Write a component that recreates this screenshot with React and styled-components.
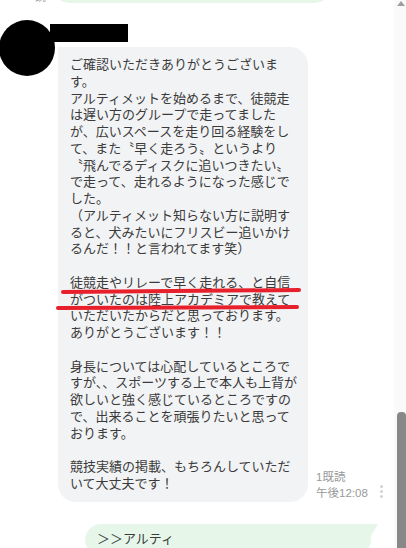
import { createGlobalStyle, styled } from 'styled-components'

const Global = createGlobalStyle`
  html, body {
    margin: 0;
    padding: 0;
    background: #ffffff;
  }
  body {
    font-family: "Noto Sans CJK JP", "Noto Sans", sans-serif;
  }
`

const Page = styled.div`
  width: 406px;
  height: 548px;
  display: flex;
  overflow: hidden;
  background: #ffffff;
`

const ChatArea = styled.div`
  position: relative;
  flex: 1;
  display: flex;
  flex-direction: column;
  overflow: hidden;
`

const TopRow = styled.div`
  display: flex;
  align-items: flex-end;
  height: 43px;
  margin-top: -40px;
  flex-shrink: 0;
`

const TopMeta = styled.span`
  width: 53px;
  padding-left: 35px;
  box-sizing: border-box;
  font-size: 11px;
  line-height: 14px;
  color: #a8a8a8;
  margin-bottom: 0;
`

const TopBubble = styled.div`
  width: 278px;
  height: 43px;
  background: #e6f7ea;
  border-radius: 0 0 16px 16px;
`

const IncomingRow = styled.div`
  display: flex;
  margin-top: 17px;
  flex-shrink: 0;
`

const Avatar = styled.div`
  width: 56px;
  height: 56px;
  border-radius: 50%;
  background: #000;
  margin-left: -1px;
  margin-right: 3px;
  flex-shrink: 0;
`

const Column = styled.div`
  display: flex;
  flex-direction: column;
`

const NameBar = styled.div`
  width: 78px;
  height: 18px;
  background: #000;
  margin-left: -8px;
  margin-top: 4px;
`

const BubbleRow = styled.div`
  display: flex;
  align-items: flex-end;
  margin-top: 5px;
`

const Bubble = styled.div`
  width: 250px;
  box-sizing: border-box;
  padding: 9px 12px 10px 12px;
  background: ${({ $sent }) => ($sent ? '#e6f7ea' : '#f2f3f5')};
  border-radius: ${({ $sent }) => ($sent ? '16px 0 16px 16px' : '0 18px 18px 18px')};
  color: #3b3b3b;
  font-size: 13px;
  line-height: 16.75px;
  white-space: pre;
`

const Meta = styled.div`
  display: flex;
  flex-direction: column;
  margin-left: 8px;
  padding-bottom: 1px;
  font-family: "Liberation Sans", "Noto Sans CJK JP", sans-serif;
  font-size: 11.5px;
  line-height: 16px;
  color: #999;
`

const Dots = styled.div`
  display: flex;
  flex-direction: column;
  gap: 2px;
  margin-left: 12px;
  margin-bottom: 4px;

  span {
    width: 3px;
    height: 3px;
    border-radius: 50%;
    background: #d2d2d2;
  }
`

const OutgoingRow = styled.div`
  display: flex;
  margin-top: 22px;
  padding-left: 85px;
  flex-shrink: 0;
`

const SentBubble = styled(Bubble)`
  position: relative;
  width: 286px;
  padding: 6px 12px 10px 12px;
  border-radius: 16px 0 16px 16px;

  &::after {
    content: '';
    position: absolute;
    top: 0;
    right: -7px;
    width: 0;
    height: 0;
    border-top: 12px solid #e6f7ea;
    border-right: 7px solid transparent;
  }
`

const Marks = styled.svg`
  position: absolute;
  left: 0;
  top: 0;
  pointer-events: none;
`

const Scrollbar = styled.div`
  width: 12px;
  display: flex;
  flex-direction: column;
  align-items: flex-end;
  background: #fafafa;
  flex-shrink: 0;
`

const Arrow = styled.div`
  width: 0;
  height: 0;
  margin: 1px 1px 0 0;
  border-left: 4px solid transparent;
  border-right: 4px solid transparent;
  border-bottom: 5px solid #9e9e9e;
`

const Thumb = styled.div`
  width: 9px;
  margin-top: auto;
  height: 136px;
  background: #888888;
  border-radius: 4px 4px 0 0;
`

const message = `ご確認いただきありがとうございま
す。
アルティメットを始めるまで、徒競走
は遅い方のグループで走ってました
が、広いスペースを走り回る経験をし
て、また〝早く走ろう〟というより
〝飛んでるディスクに追いつきたい〟
で走って、走れるようになった感じで
した。
（アルティメット知らない方に説明す
ると、犬みたいにフリスビー追いかけ
るんだ！！と言われてます笑）

徒競走やリレーで早く走れる、と自信
がついたのは陸上アカデミアで教えて
いただいたからだと思っております。
ありがとうございます！！

身長については心配しているところで
すが、、スポーツする上で本人も上背が
欲しいと強く感じているところですの
で、出来ることを頑張りたいと思って
おります。

競技実績の掲載、もちろんしていただ
いて大丈夫です！`

export default function App() {
  return (
    <>
      <Global />
      <Page>
        <ChatArea>
          <TopRow>
            <TopMeta>既読</TopMeta>
            <TopBubble />
          </TopRow>
          <IncomingRow>
            <Avatar />
            <Column>
              <NameBar />
              <BubbleRow>
                <Bubble>{message}</Bubble>
                <Meta>
                  <span>1既読</span>
                  <span>午後12:08</span>
                </Meta>
                <Dots>
                  <span />
                  <span />
                  <span />
                </Dots>
              </BubbleRow>
            </Column>
          </IncomingRow>
          <OutgoingRow>
            <SentBubble $sent>＞＞アルティ</SentBubble>
          </OutgoingRow>
          <Marks width="394" height="548" viewBox="0 0 394 548">
            <path d="M63 292 L299 290" stroke="#e8202c" strokeWidth="4" strokeLinecap="round" fill="none" />
            <path d="M58 308 L297 307" stroke="#e8202c" strokeWidth="4" strokeLinecap="round" fill="none" />
          </Marks>
        </ChatArea>
        <Scrollbar>
          <Arrow />
          <Thumb />
        </Scrollbar>
      </Page>
    </>
  )
}
